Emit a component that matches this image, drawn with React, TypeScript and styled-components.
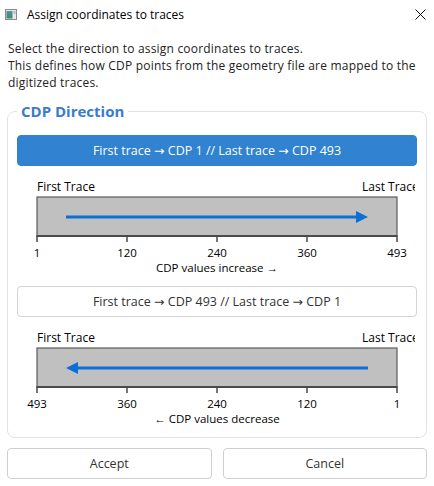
import React, { useState } from 'react';
import styled, { createGlobalStyle } from 'styled-components';

const GlobalStyle = createGlobalStyle`
  html, body {
    margin: 0;
    padding: 0;
    background: #ffffff;
  }
  body {
    font-family: "Open Sans", "Noto Sans", "Liberation Sans", sans-serif;
    color: #222222;
  }
`

const Window = styled.div`
  width: 434px;
  height: 486px;
  display: flex;
  flex-direction: column;
  background: #ffffff;
  box-sizing: border-box;
`

const TitleBar = styled.div`
  height: 28px;
  display: flex;
  align-items: center;
  padding: 0 6px 0 5px;
  gap: 10px;
  font-size: 12px;
  color: #000000;
`

const TitleText = styled.div`
  flex: 1;
`

const CloseButton = styled.div`
  width: 12px;
  height: 12px;
  display: flex;
  align-items: center;
  justify-content: center;
  margin-right: 2px;
`

const Body = styled.div`
  flex: 1;
  display: flex;
  flex-direction: column;
  padding: 12px 7px 0;
`

const Description = styled.p`
  margin: 0 0 0 1px;
  font-size: 12px;
  letter-spacing: 0.2px;
  line-height: 17px;
  color: #222222;
`

const Group = styled.fieldset`
  margin: 10px 0 0;
  border: 1px solid #dde3ed;
  border-radius: 8px;
  padding: 0 9px 6px;
  display: flex;
  flex-direction: column;
  min-width: 0;
`

const Legend = styled.legend`
  padding: 0 4px;
  font-size: 15px;
  line-height: 20px;
  font-weight: 700;
  color: #3a7bd2;
`

const OptionButton = styled.button<{ $active?: boolean; $first?: boolean }>`
  height: 31px;
  margin-top: ${p => (p.$first ? '14px' : '6px')};
  border-radius: 4px;
  border: 1px solid ${p => (p.$active ? '#3182d0' : '#d4d4d4')};
  background: ${p => (p.$active ? '#3182d0' : '#ffffff')};
  color: ${p => (p.$active ? '#ffffff' : '#333333')};
  font-family: inherit;
  font-size: 12.5px;
  cursor: pointer;
  padding: 0;
`

const Arrow = styled.span`
  font-family: "DejaVu Sans", sans-serif;
  font-size: 12.5px;
`

const ChartSvg = styled.svg`
  display: block;
  margin-top: 6px;
  overflow: hidden;
  text {
    font-family: "Open Sans", "Noto Sans", "Liberation Sans", sans-serif;
    fill: #000000;
  }
`

const Footer = styled.div`
  display: grid;
  grid-template-columns: 1fr 1fr;
  gap: 11px;
  margin-top: 10px;
`

const FooterButton = styled.button`
  height: 31px;
  border: 1px solid #cfcfcf;
  border-radius: 4px;
  background: #ffffff;
  color: #333333;
  font-family: inherit;
  font-size: 12.5px;
  padding: 0;
`

const WindowIcon: React.FC = () => (
  <svg width="12" height="11" viewBox="0 0 12 11">
    <defs>
      <linearGradient id="ig" x1="0" y1="0" x2="0" y2="1">
        <stop offset="0" stopColor="#5a8fa8" />
        <stop offset="1" stopColor="#3d8a6a" />
      </linearGradient>
    </defs>
    <rect x="0.5" y="0.5" width="11" height="10" fill="#e8e8e8" stroke="#8a8a8a" />
    <rect x="1.5" y="2" width="6" height="7.5" fill="url(#ig)" />
    <rect x="8.5" y="2" width="2" height="3" fill="#b8b8b8" />
  </svg>
);

const CloseIcon: React.FC = () => (
  <svg width="11" height="11" viewBox="0 0 11 11">
    <path d="M0.5 0.5 L10.5 10.5 M10.5 0.5 L0.5 10.5" stroke="#111" strokeWidth="1" />
  </svg>
);

interface ChartProps {
  readonly ticks: string[];
  readonly caption: string;
  readonly reverse?: boolean;
}

const Chart: React.FC<ChartProps> = ({ ticks, caption, reverse }) => {
  const left = 20;
  const right = 380;
  const step = (right - left) / (ticks.length - 1);
  const y = 45;
  return (
    <ChartSvg width="398" height="108" viewBox="0 0 398 108">
      <text x={left} y={19} fontSize="12">First Trace</text>
      <text x={345} y={19} fontSize="12">Last Trace</text>
      <rect x={left} y={25} width={right - left} height={39} fill="#c0c0c0" stroke="#5a5a5a" strokeWidth="1.2" />
      <line x1={left - 0.5} y1={64} x2={right + 0.5} y2={64} stroke="#4a4a4a" strokeWidth="2" />
      {ticks.map((t, i) => (
        <g key={t}>
          <line x1={left + i * step} y1={64} x2={left + i * step} y2={70} stroke="#4a4a4a" strokeWidth="1.5" />
          <text x={left + i * step} y={85} fontSize="11.5" textAnchor="middle">{t}</text>
        </g>
      ))}
      {reverse ? (
        <>
          <line x1={60} y1={y} x2={351} y2={y} stroke="#0a6fd6" strokeWidth="3" />
          <path d={`M49 ${y} L61 ${y - 6} L61 ${y + 6} Z`} fill="#0a6fd6" />
        </>
      ) : (
        <>
          <line x1={49} y1={y} x2={340} y2={y} stroke="#0a6fd6" strokeWidth="3" />
          <path d={`M351 ${y} L339 ${y - 6} L339 ${y + 6} Z`} fill="#0a6fd6" />
        </>
      )}
      <text x={200} y={100} fontSize="11.5" textAnchor="middle">{caption}</text>
    </ChartSvg>
  );
};

const App: React.FC = () => {
  const [forward, setForward] = useState(true);

  return (
    <Window>
      <GlobalStyle />
      <TitleBar>
        <WindowIcon />
        <TitleText>Assign coordinates to traces</TitleText>
        <CloseButton><CloseIcon /></CloseButton>
      </TitleBar>
      <Body>
        <Description>
          Select the direction to assign coordinates to traces.<br />
          This defines how CDP points from the geometry file are mapped to the digitized traces.
        </Description>
        <Group>
          <Legend>CDP Direction</Legend>
          <OptionButton $first $active={forward} onClick={() => setForward(true)}>
            First trace <Arrow>→</Arrow> CDP 1 // Last trace <Arrow>→</Arrow> CDP 493
          </OptionButton>
          <Chart ticks={['1', '120', '240', '360', '493']} caption="CDP values increase →" />
          <OptionButton $active={!forward} onClick={() => setForward(false)}>
            First trace <Arrow>→</Arrow> CDP 493 // Last trace <Arrow>→</Arrow> CDP 1
          </OptionButton>
          <Chart ticks={['493', '360', '240', '120', '1']} caption="← CDP values decrease" reverse />
        </Group>
        <Footer>
          <FooterButton>Accept</FooterButton>
          <FooterButton>Cancel</FooterButton>
        </Footer>
      </Body>
    </Window>
  );
};

export default App;
